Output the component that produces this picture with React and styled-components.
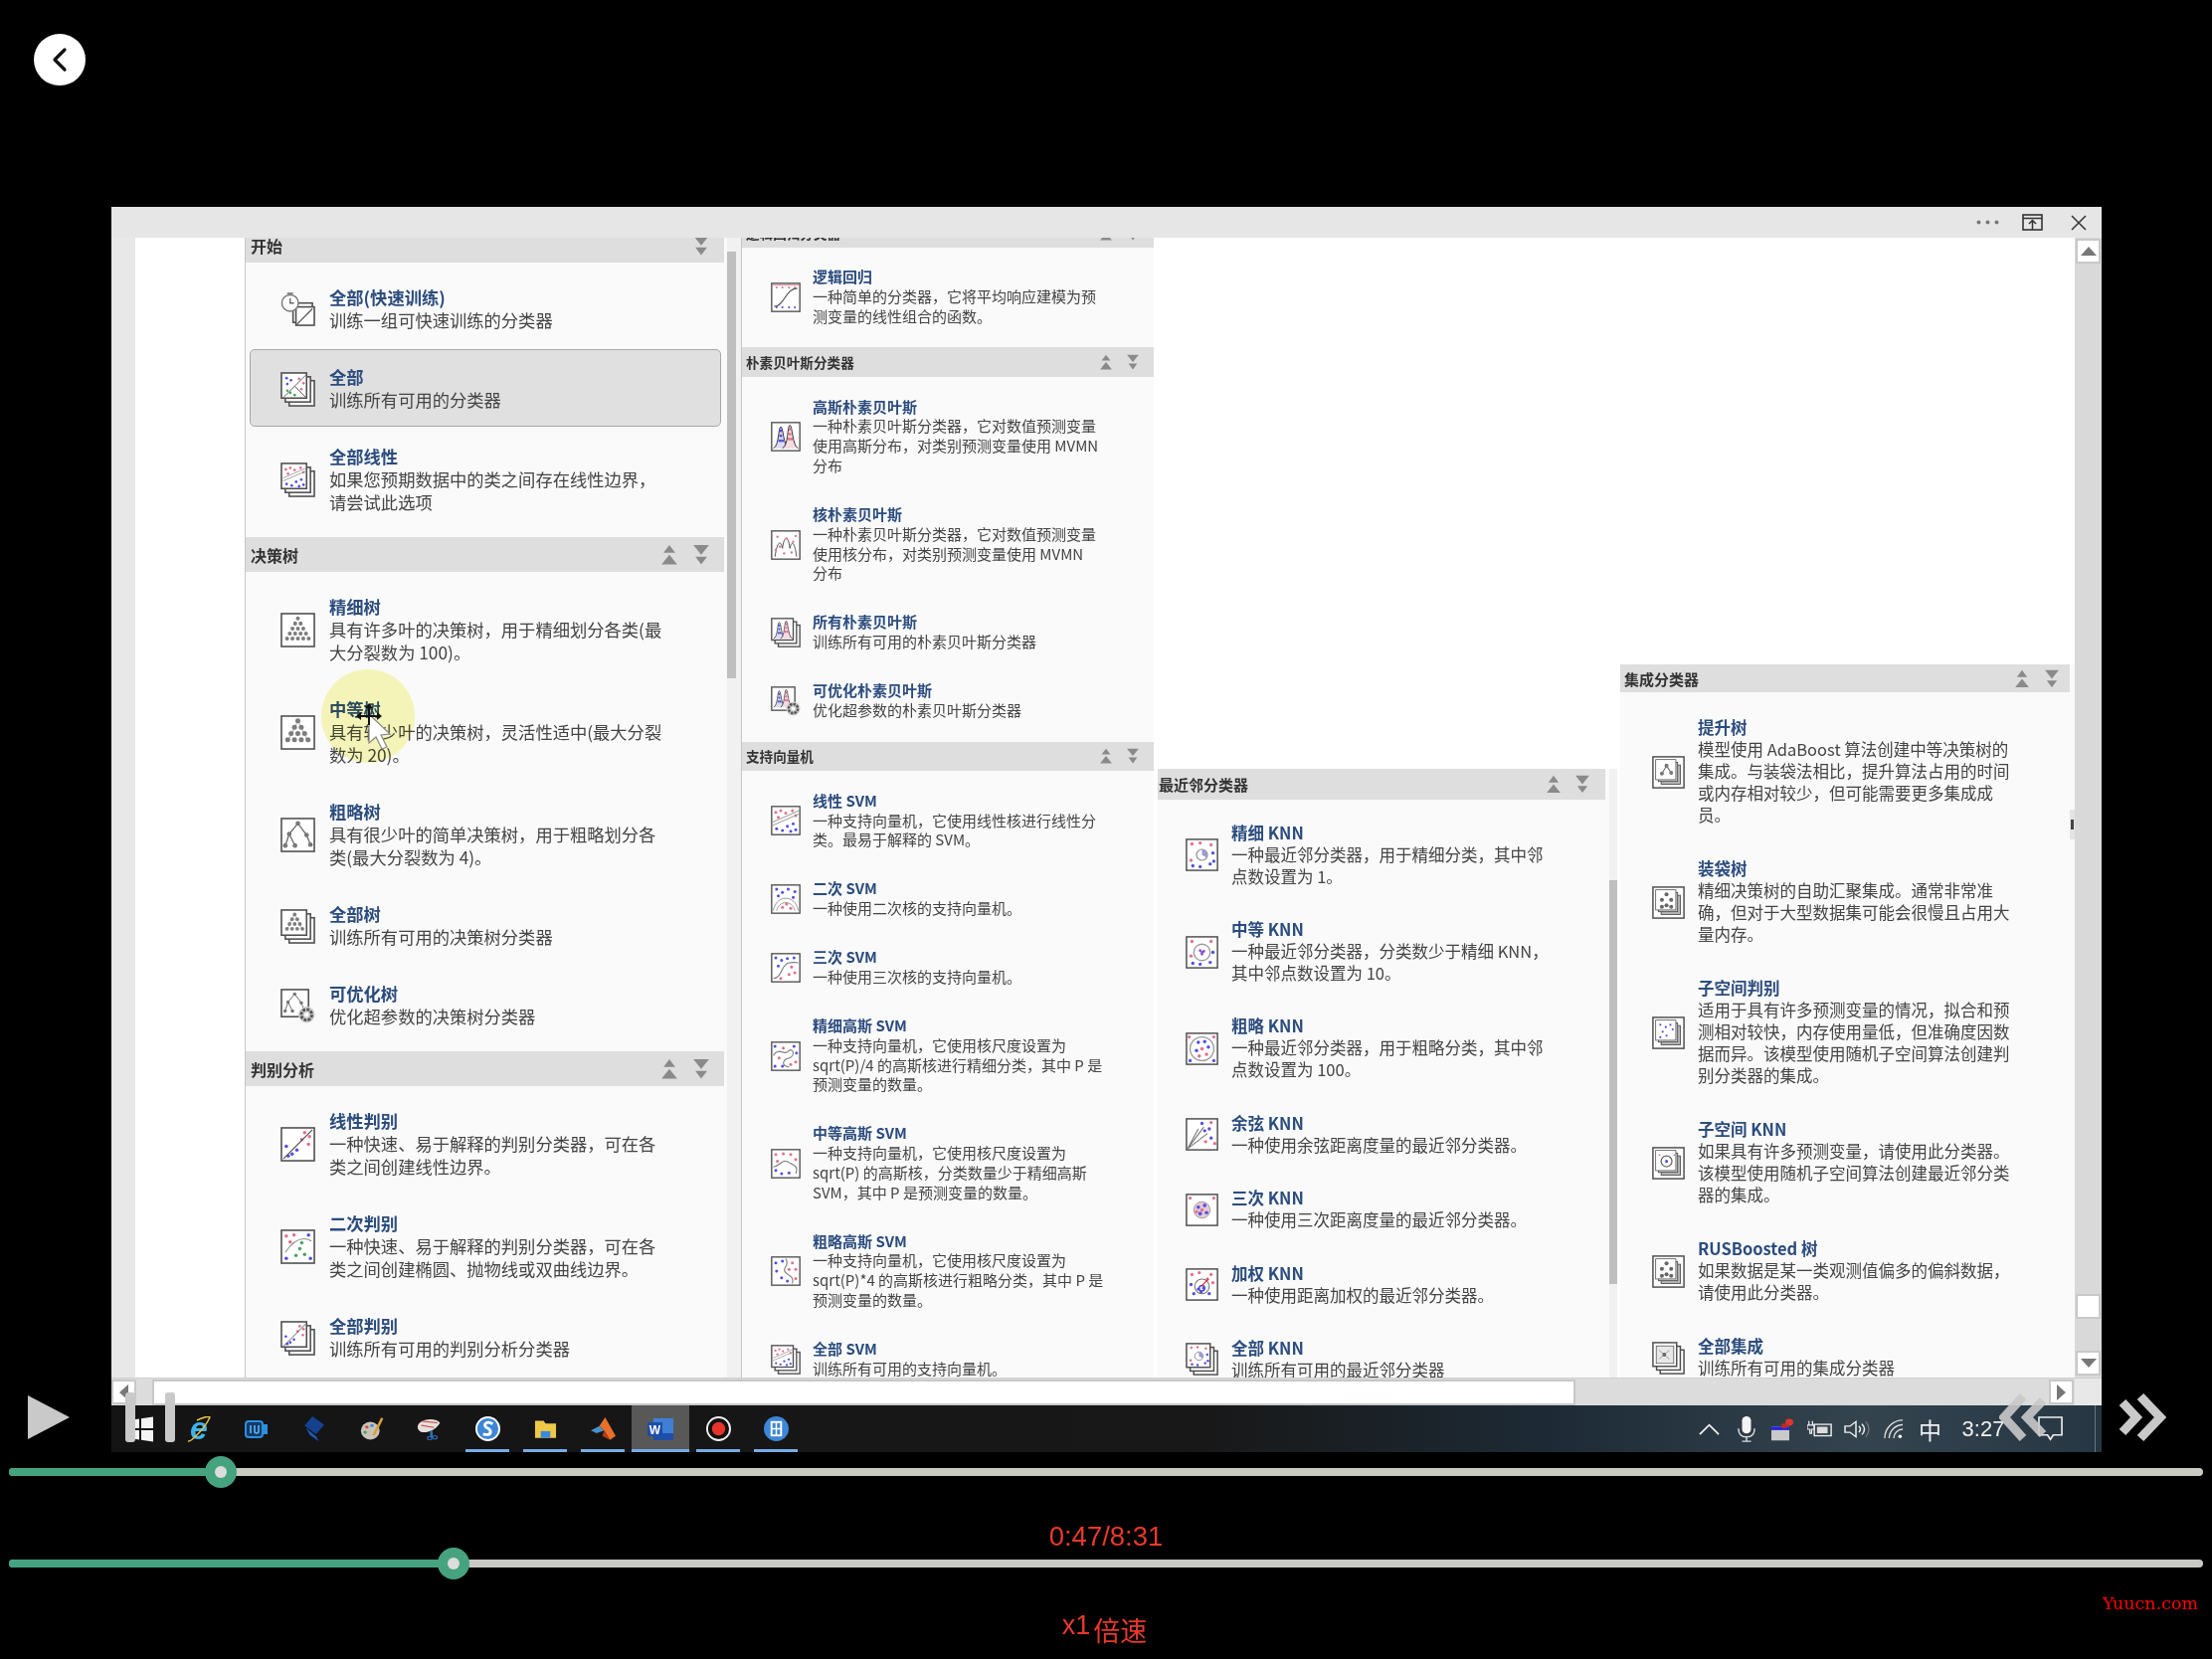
import React from "react";
import styled, { createGlobalStyle, ThemeProvider } from "styled-components";

const Global = createGlobalStyle`
  html, body { margin: 0; padding: 0; background: #000; }
  body { font-family: "Noto Sans CJK SC", "Noto Sans", sans-serif; }
`;

const Page = styled.div`
  position: relative;
  width: 2224px;
  height: 1668px;
  padding-top: 34px;
  box-sizing: border-box;
  background: #000;
  overflow: hidden;
`;

const BackButton = styled.div`
  width: 52px;
  height: 52px;
  margin-left: 34px;
  border-radius: 50%;
  background: #fff;
  display: flex;
  align-items: center;
  justify-content: center;
`;

const Window = styled.div`
  width: 2001px;
  margin: 122px 0 0 112px;
  display: flex;
  flex-direction: column;
  filter: blur(0.55px);
`;

const TitleBar = styled.div`
  height: 31px;
  background: #e6e6e6;
  display: flex;
  align-items: center;
  justify-content: flex-end;
  gap: 23px;
  padding-right: 15px;
`;

const CloseGlyph = styled.svg`
  margin-left: 5px;
`;

const Body = styled.div`
  height: 1146px;
  display: flex;
  background: #fff;
  overflow: hidden;
`;

const LeftStrip = styled.div`
  width: 24px;
  margin-right: 110px;
  background: #e8e8e8;
  flex: none;
`;

const Column = styled.div`
  flex: none;
  display: flex;
  width: ${(p) => p.theme.width}px;
  margin-top: ${(p) => p.theme.top}px;
  margin-right: ${(p) => p.theme.after || 0}px;
  border-left: ${(p) => (p.theme.line ? "1px solid #c6c6c6" : "none")};
  box-sizing: border-box;
  position: relative;
`;

const Panel = styled.div`
  flex: 1;
  min-width: 0;
  background: #fafafa;
`;

const ScrollTrack = styled.div`
  flex: none;
  width: ${(p) => p.$w}px;
  background: #f1f1f1;
`;

const ScrollThumb = styled.div`
  width: ${(p) => p.$w}px;
  height: ${(p) => p.$h}px;
  margin-top: ${(p) => p.$top}px;
  background: #bfbfbf;
`;

const SectionHead = styled.div`
  height: ${(p) => p.theme.headH}px;
  margin: 0 ${(p) => p.theme.headRight}px 0 ${(p) => p.theme.headLeft}px;
  padding: 0 ${(p) => p.theme.arrowPad}px 0 ${(p) => p.theme.labelPad}px;
  background: #dedede;
  display: flex;
  align-items: center;
  gap: ${(p) => p.theme.arrowGap}px;
`;

const HeadLabel = styled.div`
  flex: 1;
  font-size: ${(p) => p.theme.headFont}px;
  font-weight: 700;
  color: #333;
  white-space: nowrap;
`;

const ItemList = styled.div`
  padding: ${(p) => p.theme.listTop}px ${(p) => p.theme.listRight}px
    ${(p) => p.theme.listBottom}px ${(p) => p.theme.listLeft}px;
`;

const Item = styled.div`
  display: flex;
  align-items: center;
  gap: ${(p) => p.theme.iconGap}px;
  margin-bottom: ${(p) => p.theme.itemMargin}px;
  padding: ${(p) => p.theme.itemPad}px 0 ${(p) => p.theme.itemPad}px
    ${(p) => p.theme.itemLeft}px;
  border: ${(p) => p.theme.itemBorder}px solid
    ${(p) => (p.$selected ? "#a8a8a8" : "transparent")};
  border-radius: 5px;
  background: ${(p) => (p.$selected ? "#e0e0e0" : "transparent")};
`;

const ItemIcon = styled.svg`
  flex: none;
  width: ${(p) => p.theme.icon}px;
  height: ${(p) => p.theme.icon}px;
  margin-top: 2px;
`;

const ItemText = styled.div`
  font-size: ${(p) => p.theme.font}px;
  line-height: ${(p) => p.theme.lh}px;
`;

const ItemTitle = styled.div`
  font-weight: 700;
  color: #2b4c7e;
  white-space: nowrap;
`;

const ItemDesc = styled.div`
  color: #444;
  white-space: pre;
`;

const SideTab = styled.div`
  position: absolute;
  right: 0;
  top: 146px;
  width: 5px;
  height: 30px;
  background: #e4e4e4;
  &::after {
    content: "";
    display: block;
    width: 3px;
    height: 10px;
    margin: 10px 0 0 1px;
    background: #444;
  }
`;

const VScroll = styled.div`
  flex: none;
  width: 27px;
  background: #d9d9d9;
  display: flex;
  flex-direction: column;
  align-items: center;
  padding: 1px 0 2px;
  box-sizing: border-box;
`;

const ScrollButton = styled.div`
  flex: none;
  width: 25px;
  height: 25px;
  background: #fff;
  border: 2px solid #c8c8c8;
  box-sizing: border-box;
  display: flex;
  align-items: center;
  justify-content: center;
  margin-top: ${(p) => p.$mt || "0"};
  margin-bottom: ${(p) => p.$mb || 0}px;
`;

const HScroll = styled.div`
  height: 28px;
  background: #dcdcdc;
  border-top: 1px solid #cfcfcf;
  box-sizing: border-box;
  display: flex;
  align-items: center;
`;

const HThumb = styled.div`
  width: 1431px;
  height: 26px;
  margin-left: 16px;
  background: #fff;
  border: 2px solid #c8c8c8;
  box-sizing: border-box;
`;

const HSpacer = styled.div`
  flex: 1;
`;

const HCorner = styled.div`
  width: 27px;
  height: 100%;
  margin-left: 1px;
  background: #e8e8e8;
`;

const Taskbar = styled.div`
  height: 47px;
  background: linear-gradient(90deg, #141414 0%, #181818 55%, #1d2a35 72%, #34444f 88%, #263643 100%);
  display: flex;
  justify-content: space-between;
  padding: 0 6px 0 1px;
`;

const TaskGroup = styled.div`
  display: flex;
  align-items: stretch;
`;

const TaskSlot = styled.div`
  position: relative;
  width: 58px;
  display: flex;
  align-items: center;
  justify-content: center;
  background: ${(p) => (p.$active ? "#585858" : "transparent")};
  &::after {
    content: "";
    display: ${(p) => (p.$open ? "block" : "none")};
    position: absolute;
    left: ${(p) => (p.$active ? 0 : 7)}px;
    right: ${(p) => (p.$active ? 0 : 7)}px;
    bottom: 0;
    height: 3px;
    background: #76ace6;
  }
`;

const TraySlot = styled.div`
  width: ${(p) => p.$w || 37}px;
  display: flex;
  align-items: center;
  justify-content: center;
  color: #f0f0f0;
  font-size: ${(p) => p.$font || 24}px;
  font-family: "Liberation Sans", "Noto Sans CJK SC", sans-serif;
`;

const TrayDivider = styled.div`
  width: 1px;
  margin-left: 13px;
  background: #6b7780;
`;

const SliderRow = styled.div`
  position: relative;
  height: 32px;
  margin: ${(p) => p.$mt}px 9px 0;
  display: flex;
  align-items: center;
`;

const SliderTrack = styled.div`
  width: 100%;
  height: 8px;
  border-radius: 4px;
  background: #c9cac4;
  overflow: hidden;
`;

const SliderFill = styled.div`
  height: 100%;
  width: ${(p) => p.$x}px;
  background: #45a380;
`;

const SliderKnob = styled.div`
  position: absolute;
  top: 0;
  left: ${(p) => p.$x - 16}px;
  width: 32px;
  height: 32px;
  border-radius: 50%;
  background: #45a380;
  display: flex;
  align-items: center;
  justify-content: center;
  &::after {
    content: "";
    width: 12px;
    height: 12px;
    border-radius: 50%;
    background: #dcdcdc;
  }
`;

const TimeText = styled.div`
  height: 60px;
  padding-top: 35px;
  box-sizing: border-box;
  text-align: center;
  font: 27.5px/28px "Liberation Sans", sans-serif;
  color: #e8392b;
`;

const SpeedText = styled.div`
  padding-top: 32px;
  padding-right: 3px;
  text-align: center;
  font: 27px/28px "Liberation Sans", "Noto Sans CJK SC", sans-serif;
  color: #e8392b;
`;

const SpeedUnit = styled.span`
  font-family: "Noto Sans CJK SC", sans-serif;
  margin-left: 3px;
  vertical-align: -7px;
`;

const Watermark = styled.div`
  position: absolute;
  left: 2114px;
  top: 1602px;
  font: 17.5px/20px "DejaVu Serif", serif;
  color: #f00;
`;

const Spotlight = styled.div`
  position: absolute;
  left: 323px;
  top: 673px;
  width: 94px;
  height: 94px;
  border-radius: 50%;
  background: #f7f7a0;
  opacity: 0.7;
  mix-blend-mode: multiply;
`;

const CursorMark = styled.svg`
  position: absolute;
  left: 355px;
  top: 705px;
  width: 50px;
  height: 52px;
`;

const PlayGlyph = styled.svg`
  position: absolute;
  left: 28px;
  top: 1403px;
  width: 42px;
  height: 44px;
`;

const PauseBar = styled.div`
  position: absolute;
  left: ${(p) => p.$x}px;
  top: 1400px;
  width: 10px;
  height: 50px;
  border-radius: 3px;
  background: #c9c9c9;
`;

const SeekGlyph = styled.svg`
  position: absolute;
  left: ${(p) => p.$x}px;
  top: 1400px;
  width: 50px;
  height: 50px;
`;

const RED = "#e2708a";
const BLUE = "#5050e0";
const INK = "#4d4d4d";

const dots = (c, pts, r = 1.8) =>
  pts.map(([x, y], i) => <circle key={c + i} cx={x} cy={y} r={r} fill={c} />);

const pyramid = (rows, gap) => {
  const out = [];
  for (let r = 0; r < rows; r++) {
    for (let i = 0; i <= r; i++) {
      const x = 18 + (i - r / 2) * gap;
      const y = 6 + r * (26 / rows);
      out.push(<circle key={`${r}-${i}`} cx={x} cy={y} r={gap / 2.7} fill="#7d7d7d" />);
    }
  }
  return out;
};

const scatterA = [[6, 8], [12, 6], [9, 14], [18, 9], [26, 6], [30, 12]];
const scatterB = [[7, 28], [14, 30], [20, 25], [27, 22], [30, 29], [24, 31]];

const scenes = {
  mix: (
    <>
      {dots(BLUE, [[7, 7], [13, 10], [8, 15]])}
      {dots(RED, [[24, 8], [30, 14], [27, 22]])}
      {dots("#4aa35a", [[12, 27], [18, 30], [8, 24]])}
      <path d="M3 33 L33 3 M18 18 L33 33" stroke={INK} strokeWidth="1.2" fill="none" />
    </>
  ),
  linear: (
    <>
      {dots(RED, scatterA)}
      {dots(BLUE, scatterB)}
      <path d="M2 24 L34 10 M2 20 L34 6" stroke="#999" strokeWidth="1.2" fill="none" />
    </>
  ),
  treeFine: pyramid(5, 5.6),
  treeMed: (
    <>
      <path d="M18 6 L7 28 M18 6 L29 28" stroke="#aaa" strokeWidth="1" fill="none" />
      {pyramid(4, 7)}
    </>
  ),
  treeCoarse: (
    <>
      <path d="M18 6 L9 17 L5 29 M9 17 L15 29 M18 6 L27 18 L31 28" stroke="#666" strokeWidth="1.3" fill="none" />
      {dots("#777", [[18, 6], [9, 17], [27, 18], [5, 29], [15, 29], [31, 28]], 2.4)}
    </>
  ),
  qda: (
    <>
      {dots(RED, [[6, 7], [14, 6], [10, 13]])}
      {dots("#4aa35a", [[20, 20], [25, 26], [16, 27], [22, 14]])}
      {dots(BLUE, [[29, 6], [31, 30], [6, 30]])}
      <path d="M5 24 Q18 4 32 12" stroke="#888" strokeWidth="1.1" fill="none" />
    </>
  ),
  discLine: (
    <>
      {dots(RED, [[25, 6], [30, 10], [22, 13], [29, 18]])}
      {dots(BLUE, [[6, 20], [12, 28], [8, 30], [17, 24]])}
      <path d="M3 33 L33 3" stroke={INK} strokeWidth="1.2" />
    </>
  ),
  logistic: (
    <>
      {dots(RED, [[7, 6], [14, 6], [22, 6], [29, 6]], 1.3)}
      {dots(BLUE, [[7, 30], [14, 30], [22, 30], [29, 30]], 1.3)}
      <path d="M4 29 C16 29 18 7 32 7" stroke={INK} strokeWidth="1.4" fill="none" />
      <path d="M2 3 H34" stroke={RED} strokeWidth="1" />
    </>
  ),
  gauss: (
    <>
      <path d="M3 32 C10 30 9 6 12 6 C15 6 15 28 21 32" fill="#dcdcf6" stroke="#333" strokeWidth="1.2" />
      <path d="M14 32 C21 30 20 4 23 4 C26 4 26 30 33 32" fill="#f6dce2" stroke="#333" strokeWidth="1.2" />
      {dots(BLUE, [[12, 11], [12, 17], [11, 23], [14, 23]], 1.7)}
      {dots(RED, [[23, 9], [23, 15], [22, 21], [25, 21]], 1.7)}
    </>
  ),
  kernel: (
    <>
      <path d="M5 32 C8 12 12 12 14 22 C16 6 21 6 23 22 C25 12 29 14 31 32" stroke="#555" fill="none" strokeWidth="1.2" />
      {dots(RED, [[6, 24], [11, 20], [19, 10], [27, 14], [30, 7], [8, 8], [16, 28], [25, 27]], 1.4)}
    </>
  ),
  svmQuad: (
    <>
      {dots(BLUE, [[7, 6], [14, 10], [21, 6], [29, 9], [9, 14], [27, 16]])}
      {dots(RED, [[14, 28], [19, 24], [24, 29]])}
      <path d="M3 32 C6 12 30 12 33 32 M7 32 C10 19 26 19 29 32" stroke="#888" fill="none" />
    </>
  ),
  svmCubic: (
    <>
      {dots(BLUE, [[6, 6], [13, 9], [9, 16], [20, 7], [28, 6]])}
      {dots(RED, [[25, 17], [29, 24], [22, 26], [12, 31]])}
      <path d="M3 31 C14 30 12 14 22 12 C28 11 30 12 33 12" stroke="#777" fill="none" strokeWidth="1.3" />
    </>
  ),
  svmFine: (
    <>
      {dots(BLUE, [[5, 6], [28, 6], [31, 14], [5, 30], [14, 30]])}
      {dots(RED, [[15, 8], [10, 20], [24, 28], [30, 25]])}
      <path d="M3 17 C10 6 16 18 21 12 C27 6 30 18 22 20 C14 22 12 30 22 31" stroke="#777" fill="none" strokeWidth="1.3" />
    </>
  ),
  svmMed: (
    <>
      {dots(RED, [[6, 7], [15, 6], [24, 7], [30, 13], [8, 15]])}
      {dots(BLUE, [[6, 26], [13, 30], [22, 29]])}
      <path d="M3 22 C12 20 14 12 21 16 C27 20 34 20 30 30" stroke="#777" fill="none" strokeWidth="1.3" />
    </>
  ),
  svmCoarse: (
    <>
      {dots(BLUE, [[6, 8], [14, 6], [7, 18], [13, 26], [20, 30]])}
      {dots(RED, [[26, 8], [30, 16], [22, 16], [30, 27]])}
      <path d="M18 3 C24 12 12 14 18 20 C22 24 28 24 26 33" stroke="#777" fill="none" strokeWidth="1.3" />
    </>
  ),
  knnFine: (
    <>
      {dots(RED, [[7, 6], [16, 5], [28, 7], [6, 24]])}
      {dots(BLUE, [[30, 16], [27, 28], [8, 30], [16, 31], [31, 25]])}
      <circle cx="18" cy="18" r="6" fill="#fff" stroke="#888" strokeWidth="1.3" />
      <path d="M18 18 V12 A6 6 0 0 1 23 21 Z" fill="#9a9ad8" />
    </>
  ),
  knnMed: (
    <>
      {dots(RED, [[7, 6], [28, 6], [6, 22]])}
      {dots(BLUE, [[30, 18], [27, 29], [8, 30], [16, 31]])}
      <circle cx="18" cy="18" r="9" fill="#fff" stroke="#999" strokeWidth="1.4" />
      {dots("#8a5ad0", [[18, 18], [16, 16], [20, 17], [18, 20]], 1.6)}
    </>
  ),
  knnCoarse: (
    <>
      {dots(RED, [[4, 5], [31, 5]])}
      {dots(BLUE, [[5, 31], [31, 31]])}
      <circle cx="18" cy="18" r="13" fill="#fff" stroke="#999" strokeWidth="1.4" />
      {dots(BLUE, [[14, 11], [21, 10], [25, 16], [12, 20]], 1.9)}
      {dots(RED, [[18, 18], [23, 24], [15, 26]], 1.9)}
    </>
  ),
  knnCos: (
    <>
      {dots(BLUE, [[18, 6], [26, 12], [21, 14], [28, 22]])}
      {dots(RED, [[28, 5], [22, 26], [32, 28]])}
      <path d="M2 34 L20 10 M2 34 L24 17 M2 34 L14 12" stroke="#777" strokeWidth="1.2" />
    </>
  ),
  knnCubic: (
    <>
      {dots(RED, [[5, 5], [31, 5]])}
      <rect x="9" y="9" width="18" height="18" rx="9" fill="#e6c9d4" stroke="#999" />
      {dots(BLUE, [[14, 15], [21, 13], [16, 22], [23, 21]], 2)}
      {dots(RED, [[18, 18], [12, 20]], 1.8)}
    </>
  ),
  knnWeight: (
    <>
      {dots(RED, [[7, 7], [15, 5], [28, 7], [30, 16], [24, 12]])}
      {dots(BLUE, [[6, 18], [9, 28], [26, 28], [14, 23], [17, 26], [20, 22]])}
      <circle cx="18" cy="20" r="8" fill="none" stroke="#777" strokeWidth="1.2" />
      <circle cx="18" cy="22" r="3" fill="none" stroke={BLUE} strokeWidth="1.6" />
      <path d="M17 20 L25 12" stroke="#d33" strokeWidth="1.4" />
    </>
  ),
  ensTree: (
    <>
      <path d="M14 8 L8 18 M14 8 L20 17" stroke="#666" strokeWidth="1.3" />
      {dots("#777", [[14, 8], [8, 18], [20, 17]], 2.6)}
    </>
  ),
  ensBag: dots("#666", [[14, 6], [8, 13], [20, 13], [14, 20], [8, 22], [20, 22]], 2.6),
  ensSub: dots(BLUE, [[6, 6], [13, 9], [9, 15], [19, 6], [22, 12], [14, 20], [6, 22]], 1.4),
  ensKnn: (
    <>
      <circle cx="14" cy="14" r="7" fill="#fff" stroke="#666" strokeWidth="1.6" />
      {dots(BLUE, [[14, 14]], 2)}
      {dots(RED, [[5, 6], [24, 6]], 1.2)}
    </>
  ),
  ensAll: (
    <>
      <path d="M6 8 L20 20 M20 8 L6 20" stroke="#888" />
      {dots("#666", [[13, 14]], 2.6)}
    </>
  ),
};

const Frame = ({ x = 1, y = 1, s = 34 }) => (
  <rect x={x} y={y} width={s} height={s} fill="#fff" stroke={INK} strokeWidth="1.6" />
);

const Pages = () => (
  <>
    <Frame x={9} y={9} s={26} />
    <Frame x={5} y={5} s={26} />
    <Frame x={1} y={1} s={26} />
  </>
);

const Gear = () => (
  <>
    <circle cx="27" cy="27" r="8.5" fill="#cfcfcf" />
    <circle cx="27" cy="27" r="5.5" fill="none" stroke="#555" strokeWidth="3" strokeDasharray="3 1.2" />
    <circle cx="27" cy="27" r="2.2" fill="#fff" />
  </>
);

const Icon = ({ name, mode }) => {
  const scene = scenes[name];
  const small = <g transform="translate(1 1) scale(0.76)">{scene}</g>;
  return (
    <ItemIcon viewBox="0 0 36 36">
      {!mode && (
        <>
          <Frame />
          {scene}
        </>
      )}
      {mode === "stack" && (
        <>
          <Pages />
          {small}
        </>
      )}
      {mode === "opt" && (
        <>
          <Frame s={28} />
          {small}
          <Gear />
        </>
      )}
      {mode === "fast" && (
        <>
          <Frame x={13} y={11} s={20} />
          <Frame x={16} y={15} s={19} />
          <path d="M17 33 L33 17" stroke={INK} strokeWidth="1.2" />
          <circle cx="10" cy="11" r="8.5" fill="#fff" stroke="#777" strokeWidth="1.5" />
          <path d="M10 6 V11 H14 M7 1 H13" stroke="#666" strokeWidth="1.4" fill="none" />
        </>
      )}
      {mode === "ens" && (
        <>
          <Frame />
          <rect x="10" y="10" width="21" height="21" fill="#bbb" stroke={INK} />
          <rect x="7" y="7" width="21" height="21" fill="#ddd" stroke={INK} />
          <g transform="translate(4 4) scale(0.85)">
            <rect x="0" y="0" width="26" height="26" fill="#fff" stroke={INK} />
            {scene}
          </g>
        </>
      )}
      {mode === "ensAll" && (
        <>
          <Pages />
          <g transform="translate(3 3) scale(0.8)">
            <rect x="2" y="2" width="24" height="24" fill="#e8e8e8" stroke={INK} />
            {scene}
          </g>
        </>
      )}
    </ItemIcon>
  );
};

const ArrowSvg = styled.svg`
  flex: none;
  width: ${(p) => p.theme.arrow}px;
  height: ${(p) => p.theme.arrow * 1.35}px;
`;

const Arrows = ({ up }) => (
  <ArrowSvg viewBox="0 0 16 22">
    <g fill="#8a8a8a">
      {up ? (
        <>
          <polygon points="8,1 14,9 2,9" />
          <polygon points="8,11 16,21 0,21" />
        </>
      ) : (
        <>
          <polygon points="0,1 16,1 8,11" />
          <polygon points="2,13 14,13 8,21" />
        </>
      )}
    </g>
  </ArrowSvg>
);

const col1 = {
  width: 499, top: -10, line: true,
  font: 17.3, lh: 23, icon: 35, iconGap: 14, itemLeft: 30, itemPad: 15, itemMargin: 2, itemBorder: 1,
  headH: 35, headFont: 16, headLeft: 0, headRight: 3, labelPad: 5, arrowPad: 15, arrowGap: 16, arrow: 16,
  listTop: 7, listBottom: 6, listLeft: 4, listRight: 6,
};
const col2 = {
  width: 415, top: -20, line: true, after: 3,
  font: 15, lh: 19.8, icon: 30, iconGap: 12, itemLeft: 29, itemPad: 14.6, itemMargin: 0, itemBorder: 0,
  headH: 29.5, headFont: 13.6, headLeft: 0, headRight: 0, labelPad: 4, arrowPad: 15, arrowGap: 15, arrow: 12,
  listTop: 5, listBottom: 7.4, listLeft: 0, listRight: 0,
};
const col3 = {
  width: 463, top: 534, after: 3,
  font: 16.5, lh: 22, icon: 33, iconGap: 13, itemLeft: 29, itemPad: 15.7, itemMargin: 0, itemBorder: 0,
  headH: 31, headFont: 15, headLeft: 1, headRight: 4, labelPad: 1, arrowPad: 16, arrowGap: 15, arrow: 14,
  listTop: 6, listBottom: 6, listLeft: 0, listRight: 0,
};
const col4 = {
  width: 457, top: 429,
  font: 16.5, lh: 22, icon: 33, iconGap: 13, itemLeft: 32, itemPad: 16, itemMargin: 0, itemBorder: 0,
  headH: 28, headFont: 15, headLeft: 0, headRight: 5, labelPad: 4, arrowPad: 11, arrowGap: 16, arrow: 14,
  listTop: 8, listBottom: 8, listLeft: 0, listRight: 0,
};

const firstColumn = [
  {
    label: "开始", noUp: true,
    items: [
      { t: "全部(快速训练)", d: "训练一组可快速训练的分类器", i: "mix", m: "fast" },
      { t: "全部", d: "训练所有可用的分类器", i: "mix", m: "stack", selected: true },
      { t: "全部线性", d: "如果您预期数据中的类之间存在线性边界，\n请尝试此选项", i: "linear", m: "stack" },
    ],
  },
  {
    label: "决策树",
    items: [
      { t: "精细树", d: "具有许多叶的决策树，用于精细划分各类(最\n大分裂数为 100)。", i: "treeFine" },
      { t: "中等树", d: "具有较少叶的决策树，灵活性适中(最大分裂\n数为 20)。", i: "treeMed" },
      { t: "粗略树", d: "具有很少叶的简单决策树，用于粗略划分各\n类(最大分裂数为 4)。", i: "treeCoarse" },
      { t: "全部树", d: "训练所有可用的决策树分类器", i: "treeMed", m: "stack" },
      { t: "可优化树", d: "优化超参数的决策树分类器", i: "treeCoarse", m: "opt" },
    ],
  },
  {
    label: "判别分析",
    items: [
      { t: "线性判别", d: "一种快速、易于解释的判别分类器，可在各\n类之间创建线性边界。", i: "discLine" },
      { t: "二次判别", d: "一种快速、易于解释的判别分类器，可在各\n类之间创建椭圆、抛物线或双曲线边界。", i: "qda" },
      { t: "全部判别", d: "训练所有可用的判别分析分类器", i: "discLine", m: "stack" },
    ],
  },
];

const secondColumn = [
  {
    label: "逻辑回归分类器",
    items: [{ t: "逻辑回归", d: "一种简单的分类器，它将平均响应建模为预\n测变量的线性组合的函数。", i: "logistic" }],
  },
  {
    label: "朴素贝叶斯分类器",
    items: [
      { t: "高斯朴素贝叶斯", d: "一种朴素贝叶斯分类器，它对数值预测变量\n使用高斯分布，对类别预测变量使用 MVMN\n分布", i: "gauss" },
      { t: "核朴素贝叶斯", d: "一种朴素贝叶斯分类器，它对数值预测变量\n使用核分布，对类别预测变量使用 MVMN\n分布", i: "kernel" },
      { t: "所有朴素贝叶斯", d: "训练所有可用的朴素贝叶斯分类器", i: "gauss", m: "stack" },
      { t: "可优化朴素贝叶斯", d: "优化超参数的朴素贝叶斯分类器", i: "gauss", m: "opt" },
    ],
  },
  {
    label: "支持向量机",
    items: [
      { t: "线性 SVM", d: "一种支持向量机，它使用线性核进行线性分\n类。最易于解释的 SVM。", i: "linear" },
      { t: "二次 SVM", d: "一种使用二次核的支持向量机。", i: "svmQuad" },
      { t: "三次 SVM", d: "一种使用三次核的支持向量机。", i: "svmCubic" },
      { t: "精细高斯 SVM", d: "一种支持向量机，它使用核尺度设置为\nsqrt(P)/4 的高斯核进行精细分类，其中 P 是\n预测变量的数量。", i: "svmFine" },
      { t: "中等高斯 SVM", d: "一种支持向量机，它使用核尺度设置为\nsqrt(P) 的高斯核，分类数量少于精细高斯\nSVM，其中 P 是预测变量的数量。", i: "svmMed" },
      { t: "粗略高斯 SVM", d: "一种支持向量机，它使用核尺度设置为\nsqrt(P)*4 的高斯核进行粗略分类，其中 P 是\n预测变量的数量。", i: "svmCoarse" },
      { t: "全部 SVM", d: "训练所有可用的支持向量机。", i: "linear", m: "stack" },
    ],
  },
];

const thirdColumn = [
  {
    label: "最近邻分类器",
    items: [
      { t: "精细 KNN", d: "一种最近邻分类器，用于精细分类，其中邻\n点数设置为 1。", i: "knnFine" },
      { t: "中等 KNN", d: "一种最近邻分类器，分类数少于精细 KNN，\n其中邻点数设置为 10。", i: "knnMed" },
      { t: "粗略 KNN", d: "一种最近邻分类器，用于粗略分类，其中邻\n点数设置为 100。", i: "knnCoarse" },
      { t: "余弦 KNN", d: "一种使用余弦距离度量的最近邻分类器。", i: "knnCos" },
      { t: "三次 KNN", d: "一种使用三次距离度量的最近邻分类器。", i: "knnCubic" },
      { t: "加权 KNN", d: "一种使用距离加权的最近邻分类器。", i: "knnWeight" },
      { t: "全部 KNN", d: "训练所有可用的最近邻分类器", i: "knnFine", m: "stack" },
    ],
  },
];

const fourthColumn = [
  {
    label: "集成分类器",
    items: [
      { t: "提升树", d: "模型使用 AdaBoost 算法创建中等决策树的\n集成。与装袋法相比，提升算法占用的时间\n或内存相对较少，但可能需要更多集成成\n员。", i: "ensTree", m: "ens" },
      { t: "装袋树", d: "精细决策树的自助汇聚集成。通常非常准\n确，但对于大型数据集可能会很慢且占用大\n量内存。", i: "ensBag", m: "ens" },
      { t: "子空间判别", d: "适用于具有许多预测变量的情况，拟合和预\n测相对较快，内存使用量低，但准确度因数\n据而异。该模型使用随机子空间算法创建判\n别分类器的集成。", i: "ensSub", m: "ens" },
      { t: "子空间 KNN", d: "如果具有许多预测变量，请使用此分类器。\n该模型使用随机子空间算法创建最近邻分类\n器的集成。", i: "ensKnn", m: "ens" },
      { t: "RUSBoosted 树", d: "如果数据是某一类观测值偏多的偏斜数据，\n请使用此分类器。", i: "ensBag", m: "ens" },
      { t: "全部集成", d: "训练所有可用的集成分类器", i: "ensAll", m: "ensAll" },
    ],
  },
];

const Sections = ({ data }) =>
  data.map((sec) => (
    <section key={sec.label}>
      <SectionHead>
        <HeadLabel>{sec.label}</HeadLabel>
        {!sec.noUp && <Arrows up />}
        <Arrows />
      </SectionHead>
      <ItemList>
        {sec.items.map((it) => (
          <Item key={it.t} $selected={it.selected}>
            <Icon name={it.i} mode={it.m} />
            <ItemText>
              <ItemTitle>{it.t}</ItemTitle>
              <ItemDesc>{it.d}</ItemDesc>
            </ItemText>
          </Item>
        ))}
      </ItemList>
    </section>
  ));

const Triangle = ({ dir, color = "#777" }) => {
  const pts = {
    up: "0,10 16,10 8,1",
    down: "0,1 16,1 8,10",
    left: "10,0 10,16 1,8",
    right: "1,0 1,16 10,8",
  };
  const flat = dir === "up" || dir === "down";
  return (
    <svg viewBox={flat ? "0 0 16 11" : "0 0 11 16"} width={flat ? 16 : 11} height={flat ? 11 : 16}>
      <polygon points={pts[dir]} fill={color} />
    </svg>
  );
};

const IeText = styled.text`
  font: italic 700 32px "Liberation Sans", sans-serif;
  fill: #3fb4ea;
`;

const taskIcons = [
  { key: "win", node: (
    <svg width="24" height="26" viewBox="0 0 24 26">
      <path d="M0 4 L10 2.6 V12 H0 Z M12 2.2 L24 0.5 V12 H12 Z M0 14 H10 V23.4 L0 22 Z M12 14 H24 V25.5 L12 23.8 Z" fill="#f4f4f4" />
    </svg>
  ) },
  { key: "ie", node: (
    <svg width="24" height="26" viewBox="0 0 24 26">
      <IeText x="3" y="23">e</IeText>
      <path d="M1 25 C4 26 18 12 23 1 C20 -1 14 2 10 4" stroke="#e8c04a" strokeWidth="1.5" fill="none" />
    </svg>
  ) },
  { key: "iu", node: (
    <svg width="24" height="18" viewBox="0 0 24 18">
      <rect x="1" y="1" width="17" height="16" rx="3" fill="#123a66" stroke="#2d8ee0" strokeWidth="2" />
      <rect x="19" y="4" width="4" height="10" fill="#2d8ee0" />
      <path d="M6 5 V13 M10 5 V11 Q10 13 12 13 Q14 13 14 11 V5" stroke="#5cb4f5" strokeWidth="1.6" fill="none" />
    </svg>
  ) },
  { key: "shard", node: (
    <svg width="20" height="25" viewBox="0 0 22 32" preserveAspectRatio="none">
      <polygon points="9,0 22,11 13,23 0,12" fill="#14428f" />
      <polygon points="2,15 13,26 16,32 6,24" fill="#1c5ab8" />
    </svg>
  ) },
  { key: "paint", node: (
    <svg width="24" height="24" viewBox="0 0 28 32" preserveAspectRatio="none">
      <ellipse cx="12" cy="18" rx="11" ry="12" fill="#c8c4b8" />
      <circle cx="8" cy="13" r="2" fill="#d94a3a" />
      <circle cx="14" cy="11" r="2" fill="#3a8ad9" />
      <circle cx="6" cy="20" r="2" fill="#4aa35a" />
      <path d="M26 1 L16 24" stroke="#d9a03a" strokeWidth="3" />
    </svg>
  ) },
  { key: "shell", node: (
    <svg width="26" height="23" viewBox="0 0 30 34" preserveAspectRatio="none">
      <path d="M1 14 C2 3 20 -1 27 8 C24 16 14 24 6 22 C3 21 1 18 1 14 Z" fill="#e6e0da" />
      <path d="M6 6 L24 8 M5 12 L20 15" stroke="#d0404a" strokeWidth="1.5" />
      <path d="M17 20 L17 30" stroke="#2b6fc0" strokeWidth="3" />
      <circle cx="15" cy="31" r="2.5" fill="none" stroke="#2b6fc0" strokeWidth="1.5" />
      <circle cx="21" cy="30" r="2.5" fill="none" stroke="#2b6fc0" strokeWidth="1.5" />
    </svg>
  ) },
  { key: "sogou", open: true, node: (
    <svg width="25" height="25" viewBox="0 0 26 26">
      <circle cx="13" cy="13" r="13" fill="#fff" />
      <circle cx="13" cy="13" r="11" fill="#3d86d8" />
      <path d="M18 8 C12 4 7 9 12 12 C18 15 17 21 8 18.5" stroke="#fff" strokeWidth="3" fill="none" />
    </svg>
  ) },
  { key: "folder", open: true, node: (
    <svg width="23" height="20" viewBox="0 0 24 20">
      <path d="M1 1 H10 L12 4 H23 V19 H1 Z" fill="#f0c848" />
      <rect x="7" y="12" width="10" height="7" fill="#3a8ad9" />
    </svg>
  ) },
  { key: "matlab", open: true, node: (
    <svg width="25" height="24" viewBox="0 0 26 36" preserveAspectRatio="none">
      <polygon points="0,20 9,13 14,20 6,24" fill="#4a90c8" />
      <polygon points="15,0 26,28 20,34 14,20 9,13" fill="#e8702a" />
      <polygon points="14,20 20,34 12,28" fill="#b83a1a" />
    </svg>
  ) },
  { key: "word", open: true, active: true, node: (
    <svg width="26" height="24" viewBox="0 0 26 24">
      <rect x="6" y="1" width="20" height="22" fill="#3f7fd6" />
      <rect x="6" y="16" width="20" height="7" fill="#1f4fa8" />
      <rect x="0" y="5" width="15" height="14" fill="#1d4ea6" />
      <text x="7.5" y="16.5" fontSize="12" fontWeight="700" fill="#fff" textAnchor="middle" fontFamily="Liberation Sans">W</text>
    </svg>
  ) },
  { key: "rec", open: true, node: (
    <svg width="25" height="25" viewBox="0 0 26 26">
      <circle cx="13" cy="13" r="12" fill="#111" stroke="#f0f0f0" strokeWidth="2" />
      <circle cx="13" cy="13" r="7" fill="#e5352b" />
    </svg>
  ) },
  { key: "film", open: true, node: (
    <svg width="25" height="25" viewBox="0 0 26 26">
      <circle cx="13" cy="13" r="13" fill="#3d86d8" />
      <rect x="8" y="6" width="10" height="14" fill="none" stroke="#fff" strokeWidth="2" />
      <path d="M8 13 H18 M13 6 V20" stroke="#fff" strokeWidth="1.5" />
    </svg>
  ) },
];

const CaretUp = () => (
  <svg width="21" height="12" viewBox="0 0 22 14" preserveAspectRatio="none">
    <path d="M1 13 L11 2 L21 13" stroke="#eee" strokeWidth="1.8" fill="none" />
  </svg>
);

const MicIcon = () => (
  <svg width="18" height="26" viewBox="0 0 20 30" preserveAspectRatio="none">
    <rect x="5" y="0" width="10" height="20" rx="5" fill="#f4f4f4" />
    <path d="M1 14 Q1 24 10 24 Q19 24 19 14 M10 24 V29 M5 29 H15" stroke="#ddd" strokeWidth="1.6" fill="none" />
  </svg>
);

const PinIcon = () => (
  <svg width="24" height="26" viewBox="0 0 24 30" preserveAspectRatio="none">
    <rect x="0" y="12" width="18" height="16" fill="#c9c9c9" />
    <rect x="0" y="12" width="18" height="4" fill="#2222dd" />
    <circle cx="18" cy="7" r="4" fill="#e0352b" />
    <circle cx="13" cy="11" r="3" fill="#c0281f" />
  </svg>
);

const BatteryIcon = () => (
  <svg width="25" height="18" viewBox="0 0 28 22" preserveAspectRatio="none">
    <rect x="8" y="5" width="19" height="14" fill="none" stroke="#eee" strokeWidth="1.6" />
    <rect x="11" y="8" width="12" height="8" fill="#ddd" />
    <path d="M2 1 V6 M6 1 V6 M0 6 H8 V11 H5 V16 H3 V11 H0 Z" stroke="#eee" strokeWidth="1.4" fill="none" />
  </svg>
);

const VolumeIcon = () => (
  <svg width="26" height="20" viewBox="0 0 26 26" preserveAspectRatio="none">
    <path d="M1 9 H6 L12 3 V23 L6 17 H1 Z" fill="none" stroke="#eee" strokeWidth="1.5" />
    <path d="M15 9 Q18 13 15 17 M18 6 Q23 13 18 20" stroke="#eee" strokeWidth="1.5" fill="none" />
    <path d="M22 3 Q28 13 22 23" stroke="#777" strokeWidth="1.3" fill="none" />
  </svg>
);

const WifiIcon = () => (
  <svg width="20" height="20" viewBox="0 0 22 22">
    <path d="M1 21 A20 20 0 0 1 21 1 M6 21 A15 15 0 0 1 21 6 M11 21 A10 10 0 0 1 21 11" stroke="#ddd" strokeWidth="1.5" fill="none" />
    <circle cx="18" cy="19" r="2" fill="#fff" />
  </svg>
);

const NoteIcon = () => (
  <svg width="25" height="25" viewBox="0 0 26 28" preserveAspectRatio="none">
    <path d="M1 1 H25 V21 H16 L13 26 L10 21 H1 Z" fill="none" stroke="#eee" strokeWidth="1.7" />
  </svg>
);

const App = () => (
  <Page>
    <Global />
    <BackButton>
      <svg width="16" height="26" viewBox="0 0 16 26">
        <path d="M13 3 L3 13 L13 23" stroke="#111" strokeWidth="3.2" strokeLinecap="round" strokeLinejoin="round" fill="none" />
      </svg>
    </BackButton>

    <Window>
      <TitleBar>
        <svg width="23" height="5" viewBox="0 0 23 5">
          <circle cx="2.5" cy="2.5" r="2" fill="#777" />
          <circle cx="11.5" cy="2.5" r="2" fill="#777" />
          <circle cx="20.5" cy="2.5" r="2" fill="#777" />
        </svg>
        <svg width="21" height="17" viewBox="0 0 21 17">
          <rect x="1" y="1" width="19" height="15" fill="none" stroke="#333" strokeWidth="1.6" />
          <path d="M1 4.5 H20 M10.5 16 V7 M7 10 L10.5 6.5 L14 10" stroke="#333" strokeWidth="1.5" fill="none" />
        </svg>
        <CloseGlyph width="16" height="16" viewBox="0 0 16 16">
          <path d="M1 1 L15 15 M15 1 L1 15" stroke="#333" strokeWidth="1.5" />
        </CloseGlyph>
      </TitleBar>

      <Body>
        <LeftStrip />
        <ThemeProvider theme={col1}>
          <Column>
            <Panel>
              <Sections data={firstColumn} />
            </Panel>
            <ScrollTrack $w={14}>
              <ScrollThumb $w={9} $h={429} $top={24} />
            </ScrollTrack>
          </Column>
        </ThemeProvider>
        <ThemeProvider theme={col2}>
          <Column>
            <Panel>
              <Sections data={secondColumn} />
            </Panel>
          </Column>
        </ThemeProvider>
        <ThemeProvider theme={col3}>
          <Column>
            <Panel>
              <Sections data={thirdColumn} />
            </Panel>
            <ScrollTrack $w={8}>
              <ScrollThumb $w={8} $h={406} $top={112} />
            </ScrollTrack>
          </Column>
        </ThemeProvider>
        <ThemeProvider theme={col4}>
          <Column>
            <Panel>
              <Sections data={fourthColumn} />
            </Panel>
            <SideTab />
          </Column>
        </ThemeProvider>
        <VScroll>
          <ScrollButton>
            <Triangle dir="up" />
          </ScrollButton>
          <ScrollButton $mt="auto" $mb={32} />
          <ScrollButton>
            <Triangle dir="down" />
          </ScrollButton>
        </VScroll>
      </Body>

      <HScroll>
        <ScrollButton>
          <Triangle dir="left" />
        </ScrollButton>
        <HThumb />
        <HSpacer />
        <ScrollButton>
          <Triangle dir="right" />
        </ScrollButton>
        <HCorner />
      </HScroll>

      <Taskbar>
        <TaskGroup>
          {taskIcons.map((t) => (
            <TaskSlot key={t.key} $open={t.open} $active={t.active}>
              {t.node}
            </TaskSlot>
          ))}
        </TaskGroup>
        <TaskGroup>
          <TraySlot><CaretUp /></TraySlot>
          <TraySlot><MicIcon /></TraySlot>
          <TraySlot><PinIcon /></TraySlot>
          <TraySlot><BatteryIcon /></TraySlot>
          <TraySlot><VolumeIcon /></TraySlot>
          <TraySlot><WifiIcon /></TraySlot>
          <TraySlot $font={23}>中</TraySlot>
          <TraySlot $w={70} $font={22}>3:27</TraySlot>
          <TraySlot $w={64}><NoteIcon /></TraySlot>
          <TrayDivider />
        </TaskGroup>
      </Taskbar>
    </Window>

    <SliderRow $mt={4}>
      <SliderTrack>
        <SliderFill $x={213} />
      </SliderTrack>
      <SliderKnob $x={213} />
    </SliderRow>
    <TimeText>0:47/8:31</TimeText>
    <SliderRow $mt={0}>
      <SliderTrack>
        <SliderFill $x={447} />
      </SliderTrack>
      <SliderKnob $x={447} />
    </SliderRow>
    <SpeedText>
      x1<SpeedUnit>倍速</SpeedUnit>
    </SpeedText>
    <Watermark>Yuucn.com</Watermark>

    <Spotlight />
    <CursorMark viewBox="0 0 50 52">
      <path d="M16 13 L16 42 L23 36 L29 48 L34 46 L28 34 L37 33 Z" fill="#fff" stroke="#888" strokeWidth="1.2" />
      <path d="M5 15 H27 M16 5 V24" stroke="#111" strokeWidth="2" />
      <path d="M3 15 L8 11 V19 Z M29 15 L24 11 V19 Z M16 2 L12 7 H20 Z" fill="#111" />
    </CursorMark>
    <PlayGlyph viewBox="0 0 42 44">
      <polygon points="0,0 42,22 0,44" fill="#c9c9c9" />
    </PlayGlyph>
    <PauseBar $x={126} />
    <PauseBar $x={166} />
    <SeekGlyph $x={2010} viewBox="0 0 50 50">
      <path d="M24 4 L5 25 L24 46 M44 8 L28 25 L44 42" stroke="#c9c9c9" strokeWidth="9" fill="none" opacity="0.9" />
    </SeekGlyph>
    <SeekGlyph $x={2130} viewBox="0 0 50 50">
      <path d="M4 10 L18 25 L4 40 M22 4 L42 25 L22 46" stroke="#c9c9c9" strokeWidth="9" fill="none" />
    </SeekGlyph>
  </Page>
);

export default App;
